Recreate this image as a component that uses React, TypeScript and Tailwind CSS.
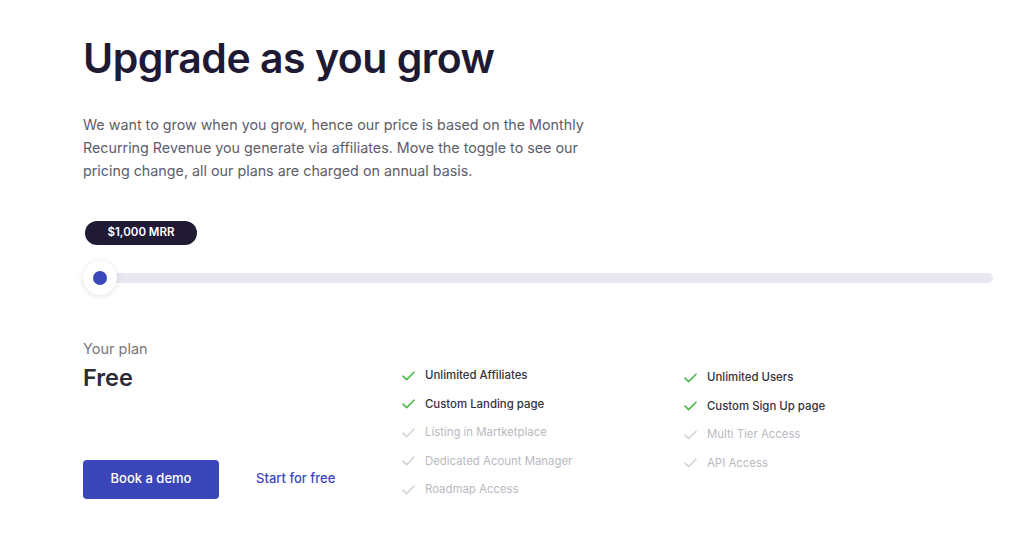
const left = [
  { label: 'Unlimited Affiliates', on: true },
  { label: 'Custom Landing page', on: true },
  { label: 'Listing in Martketplace', on: false },
  { label: 'Dedicated Acount Manager', on: false },
  { label: 'Roadmap Access', on: false },
];

const right = [
  { label: 'Unlimited Users', on: true },
  { label: 'Custom Sign Up page', on: true },
  { label: 'Multi Tier Access', on: false },
  { label: 'API Access', on: false },
];

function Check({ on }: { on: boolean }) {
  return (
    <svg width="13" height="10" viewBox="0 0 13 10" fill="none" className="shrink-0">
      <path
        d="M1 5.2L4.6 8.6L12 1.2"
        stroke={on ? '#4cb84a' : '#d4d4d8'}
        strokeWidth="1.6"
        strokeLinecap="round"
        strokeLinejoin="round"
      />
    </svg>
  );
}

function Feature({ label, on }: { label: string; on: boolean }) {
  return (
    <li className="flex items-center gap-[10px] h-[28.5px]">
      <Check on={on} />
      <span className={on ? 'text-[11.4px] font-medium text-[#34333d]' : 'text-[11.4px] text-[#b9b9bf]'}>
        {label}
      </span>
    </li>
  );
}

export default function App() {
  return (
    <div className="w-[1024px] h-[554px] bg-white font-['Inter',sans-serif] overflow-hidden">
      <div className="pl-[83px] pr-[31px] pt-[32px]">
        <h1 className="text-[41px] leading-[52px] font-semibold tracking-[-0.5px] text-[#1f1a33]">
          Upgrade as you grow
        </h1>

        <p className="mt-[29px] w-[520px] text-[14.3px] leading-[23px] text-[#5d5d69]">
          We want to grow when you grow, hence our price is based on the Monthly Recurring Revenue you generate via
          affiliates. Move the toggle to see our pricing change, all our plans are charged on annual basis.
        </p>

        {/* slider */}
        <div className="mt-[36px]">
          <div className="ml-[2px] inline-flex items-center justify-center h-[24px] w-[112px] rounded-full bg-[#211a35] text-white text-[11.5px] font-semibold">
            $1,000 MRR
          </div>
          <div className="relative mt-[16px] h-[34px] flex items-center">
            <div className="w-full h-[10px] rounded-full bg-[#e9e8f0]" />
            <div className="absolute left-0 top-0 w-[34px] h-[34px] rounded-full bg-white shadow-[0_1px_6px_rgba(0,0,0,0.12)] flex items-center justify-center">
              <div className="w-[14px] h-[14px] rounded-full bg-[#3a47bd]" />
            </div>
          </div>
        </div>

        {/* plan */}
        <div className="mt-[44px] flex">
          <div className="w-[319px] flex flex-col">
            <div className="text-[14.5px] text-[#77767f] leading-[20px]">Your plan</div>
            <div className="mt-[4px] text-[23.5px] font-semibold text-[#2c2b36] leading-[30px]">Free</div>
            <div className="mt-[67px] flex items-center">
              <button className="h-[39px] w-[136px] rounded-[4px] bg-[#3a46b9] text-white text-[13px] font-medium">
                Book a demo
              </button>
              <a className="ml-[37px] text-[13px] font-medium text-[#3b48bf]">Start for free</a>
            </div>
          </div>
          <ul className="w-[282px] mt-[23px]">
            {left.map((f) => (
              <Feature key={f.label} {...f} />
            ))}
          </ul>
          <ul className="mt-[25px]">
            {right.map((f) => (
              <Feature key={f.label} {...f} />
            ))}
          </ul>
        </div>
      </div>
    </div>
  );
}
